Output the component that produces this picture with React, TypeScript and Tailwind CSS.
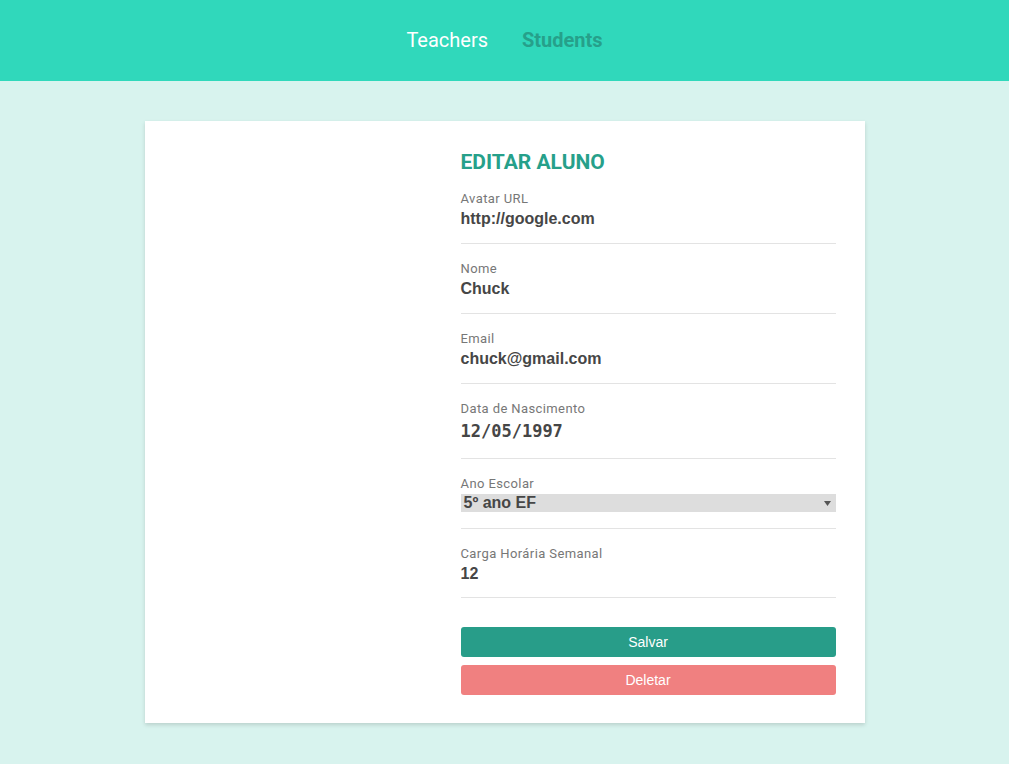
import React from "react";

const labelCls =
  "block text-[13px] leading-[15px] tracking-[0.4px] text-[#777] font-['Roboto',sans-serif]";
const valueCls =
  "mt-[4px] text-[16px] leading-[18px] font-bold text-[#464646] font-['Liberation_Sans',Arial,sans-serif]";

function Field({ label, value }: { label: string; value: string }) {
  return (
    <div className="mt-[17px] border-b border-[#e3e3e3] pb-[15px]">
      <span className={labelCls}>{label}</span>
      <div className={valueCls}>{value}</div>
    </div>
  );
}

export default function App() {
  return (
    <div className="min-h-[764px] bg-[#d8f3ee]">
      <header className="flex h-[81px] items-center justify-center gap-[34px] bg-[#30d8bb] pb-[2px] font-['Roboto',sans-serif] text-[20px]">
        <a className="text-white">Teachers</a>
        <a className="font-bold text-[#26a08a]">Students</a>
      </header>
      <main className="pt-[40px] pb-[40px]">
        <div className="mx-auto flex w-[720px] bg-white pb-[28px] shadow-[0_2px_4px_rgba(0,0,0,0.14)]">
          <div className="w-[316px] shrink-0" />
          <div className="w-[375px] pt-[29px]">
            <h1 className="font-['Roboto',sans-serif] text-[21px] font-bold leading-[24px] text-[#26a08a]">
              EDITAR ALUNO
            </h1>
            <div className="mt-[1px]">
              <Field label="Avatar URL" value="http://google.com" />
              <Field label="Nome" value="Chuck" />
              <Field label="Email" value="chuck@gmail.com" />
              <div className="mt-[17px] border-b border-[#e3e3e3] pb-[16px]">
                <span className={labelCls}>Data de Nascimento</span>
                <div className="mt-[3px] h-[23px] pt-[2px] font-['DejaVu_Sans_Mono',monospace] text-[17px] font-bold leading-[20px] text-[#464646]">
                  12/05/1997
                </div>
              </div>
              <div className="mt-[17px] border-b border-[#e3e3e3] pb-[16px]">
                <span className={labelCls}>Ano Escolar</span>
                <div className="mt-[3px] flex h-[18px] items-center justify-between bg-[#dddddd] pl-[3px] pr-[5px]">
                  <span className="font-['Liberation_Sans',Arial,sans-serif] text-[16px] font-bold leading-[18px] text-[#464646]">
                    5º ano EF
                  </span>
                  <svg width="7" height="7" viewBox="0 0 7 7">
                    <path d="M0 1 L7 1 L3.5 6 Z" fill="#555" />
                  </svg>
                </div>
              </div>
              <div className="mt-[17px] border-b border-[#e3e3e3] pb-[14px]">
                <span className={labelCls}>Carga Horária Semanal</span>
                <div className={valueCls}>12</div>
              </div>
            </div>
            <button className="mt-[29px] block h-[30px] w-full rounded-[3px] bg-[#289d89] font-['Liberation_Sans',Arial,sans-serif] text-[14px] text-white">
              Salvar
            </button>
            <button className="mt-[8px] block h-[30px] w-full rounded-[3px] bg-[#f08080] font-['Liberation_Sans',Arial,sans-serif] text-[14px] text-white">
              Deletar
            </button>
          </div>
        </div>
      </main>
    </div>
  );
}
